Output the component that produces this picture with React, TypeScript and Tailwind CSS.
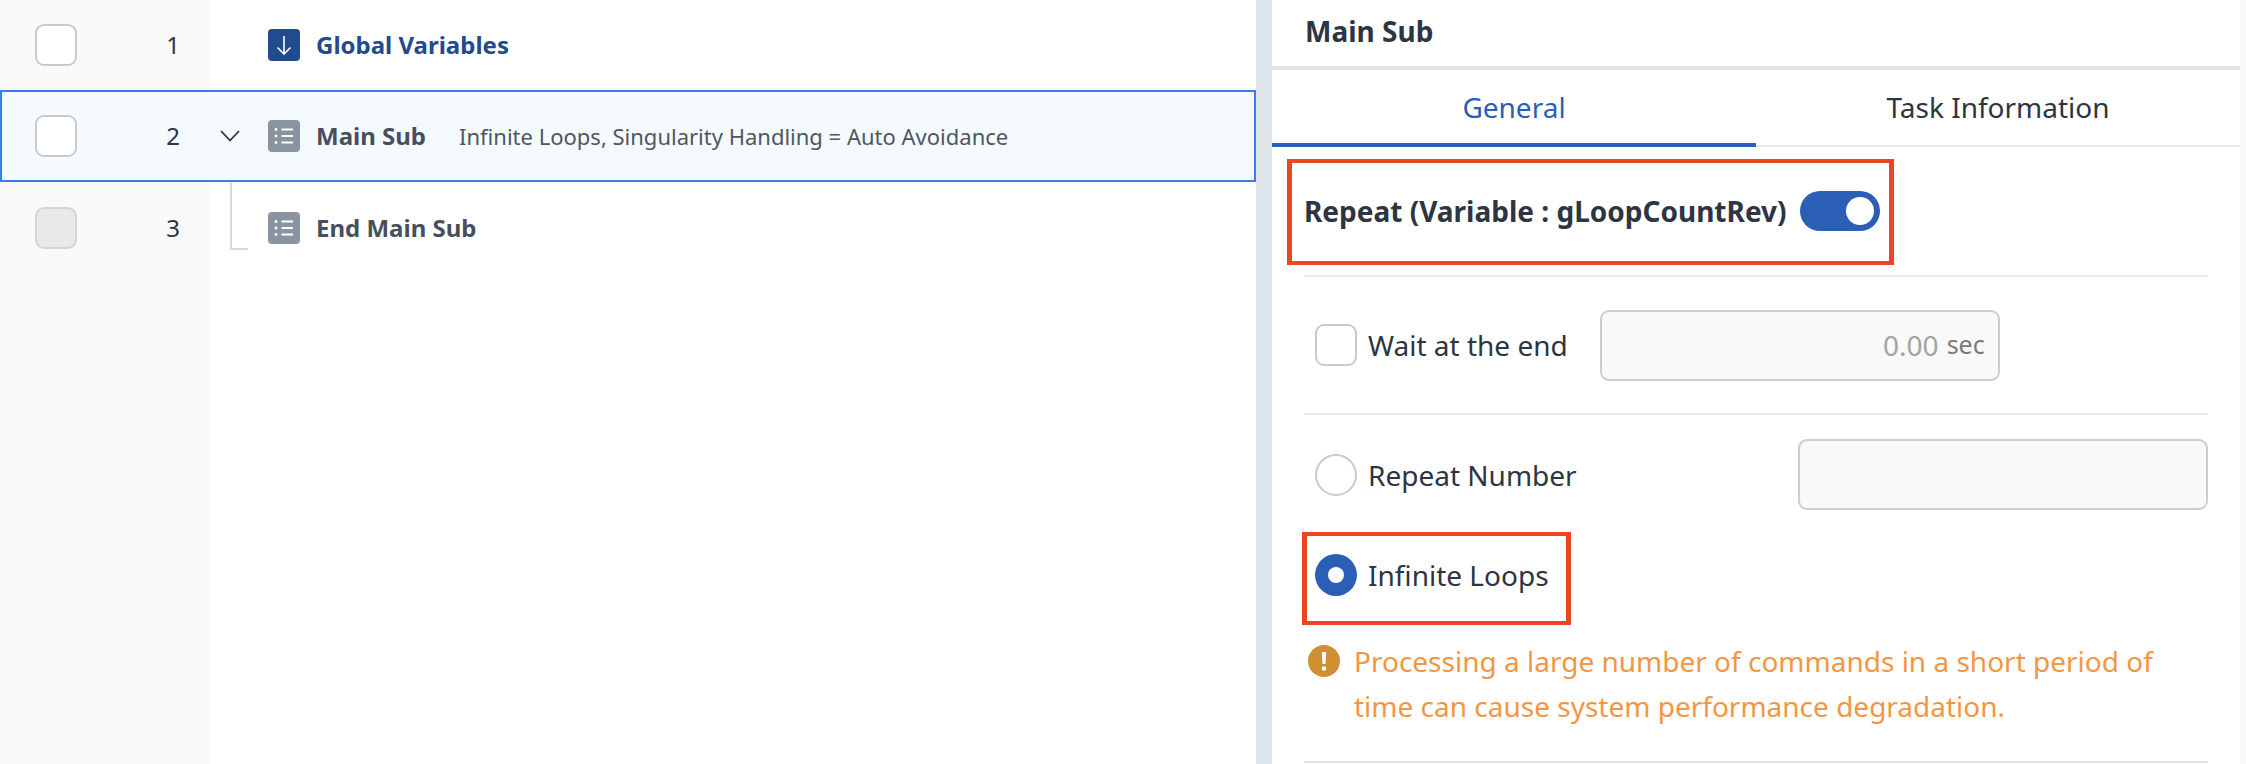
const BLUE = 'bg-[#2a5fb5]';

function Checkbox({ disabled }: { disabled?: boolean }) {
  return (
    <div
      className={`h-[42px] w-[42px] shrink-0 rounded-[9px] border-2 ${
        disabled ? 'border-[#d4d4d4] bg-[#e9e9e9]' : 'border-[#c9cacd] bg-white'
      }`}
    />
  );
}

function ListIcon() {
  return (
    <div className="flex h-[32px] w-[32px] shrink-0 items-center justify-center rounded-[4px] bg-[#8a94a1]">
      <svg width="20" height="18" viewBox="0 0 20 18" fill="none">
        <circle cx="2" cy="2.5" r="1.4" fill="white" />
        <circle cx="2" cy="9" r="1.4" fill="white" />
        <circle cx="2" cy="15.5" r="1.4" fill="white" />
        <path d="M7.5 2.5H19M7.5 9H19M7.5 15.5H19" stroke="white" strokeWidth="1.8" />
      </svg>
    </div>
  );
}

function ArrowIcon() {
  return (
    <div className="flex h-[32px] w-[32px] shrink-0 items-center justify-center rounded-[4px] bg-[#224a8f]">
      <svg width="16" height="20" viewBox="0 0 16 20" fill="none">
        <path d="M8 1V19M1.5 12.5L8 19L14.5 12.5" stroke="white" strokeWidth="1.6" />
      </svg>
    </div>
  );
}

function Row({
  num,
  height,
  selected,
  disabled,
  children,
}: {
  num: number;
  height: string;
  selected?: boolean;
  disabled?: boolean;
  children: React.ReactNode;
}) {
  return (
    <div className={`relative flex ${height} ${selected ? 'bg-[#f5faff] ring-2 ring-inset ring-[#3b7de8]' : ''}`}>
      <div className={`flex w-[210px] shrink-0 items-center pl-[35px] ${selected ? '' : 'bg-[#f9f9f9]'}`}>
        <Checkbox disabled={disabled} />
        <span className="ml-[73px] w-[46px] text-center text-[24px] text-[#2d3542]">{num}</span>
      </div>
      <div className="flex min-w-0 flex-1 items-center">{children}</div>
    </div>
  );
}

export default function App() {
  return (
    <div
      className="flex h-[764px] w-[2246px] overflow-hidden bg-white"
      style={{ fontFamily: '"Noto Sans", sans-serif' }}
    >
      {/* command list */}
      <div className="flex w-[1256px] shrink-0 flex-col">
        <Row num={1} height="h-[90px]">
          <div className="ml-[58px] flex items-center gap-[16px]">
            <ArrowIcon />
            <span className="text-[24px] font-bold text-[#224a8f]">Global Variables</span>
          </div>
        </Row>
        <Row num={2} height="h-[92px]" selected>
          <svg className="ml-[10px]" width="20" height="12" viewBox="0 0 20 12" fill="none">
            <path d="M1 1L10 10.5L19 1" stroke="#2d3542" strokeWidth="1.8" />
          </svg>
          <div className="ml-[28px] flex items-center gap-[16px]">
            <ListIcon />
            <span className="text-[24px] font-bold text-[#474f5c]">Main Sub</span>
          </div>
          <span className="ml-[33px] text-[22px] text-[#4f5661]">Infinite Loops, Singularity Handling = Auto Avoidance</span>
        </Row>
        <Row num={3} height="h-[92px]" disabled>
          <div className="absolute left-[230px] top-0 h-[68px] w-[18px] border-b-2 border-l-2 border-[#d8dadd]" />
          <div className="ml-[58px] flex items-center gap-[16px]">
            <ListIcon />
            <span className="text-[24px] font-bold text-[#474f5c]">End Main Sub</span>
          </div>
        </Row>
        <div className="w-[210px] flex-1 bg-[#f9f9f9]" />
      </div>

      {/* splitter */}
      <div className="w-[16px] shrink-0 bg-[#e0e5ea]" />

      {/* properties panel */}
      <div className="flex w-[968px] shrink-0 flex-col">
        <div className="flex h-[70px] shrink-0 items-center border-b-4 border-[#e4e4e4] pb-[4px] pl-[33px]">
          <span className="text-[28px] font-bold text-[#2d3542]">Main Sub</span>
        </div>

        <div className="flex h-[77px] shrink-0">
          <div className="flex flex-1 items-center justify-center border-b-4 border-[#2a5fb5] text-[28px] text-[#2a5fb5]">
            General
          </div>
          <div className="flex flex-1 items-center justify-center border-b-2 border-[#e8e8ee] pb-[2px] text-[28px] text-[#2d3542]">
            Task Information
          </div>
        </div>

        <div className="mx-[32px] flex flex-col">
          <div className="relative flex h-[130px] items-center gap-[13px] border-b-2 border-[#e8e8ee]">
            <span className="text-[28px] font-bold text-[#2d3542]">Repeat (Variable : gLoopCountRev)</span>
            <div className={`flex h-[40px] w-[80px] items-center justify-end rounded-full pr-[6px] ${BLUE}`}>
              <div className="h-[28px] w-[28px] rounded-full bg-white" />
            </div>
            <div className="pointer-events-none absolute left-[-17px] top-[12px] h-[106px] w-[607px] border-x-[5px] border-y-4 border-[#ee4426]" />
          </div>

          <div className="flex h-[138px] items-center border-b-2 border-[#e8e8ee] pl-[11px]">
            <Checkbox />
            <span className="ml-[11px] text-[28px] text-[#2d3542]">Wait at the end</span>
            <div className="ml-[32px] flex h-[71px] w-[400px] items-center justify-end gap-[8px] rounded-[9px] border-2 border-[#cdcdcd] bg-[#f9f9f9] pr-[13px]">
              <span className="text-[28px] text-[#a3a3a3]">0.00</span>
              <span className="text-[25px] text-[#777b80]">sec</span>
            </div>
          </div>

          <div className="flex h-[95px] shrink-0 items-center justify-between pl-[11px] pt-[24px]">
            <div className="flex items-center gap-[11px]">
              <div className="h-[42px] w-[42px] rounded-full border-2 border-[#c9cacd]" />
              <span className="text-[28px] text-[#2d3542]">Repeat Number</span>
            </div>
            <div className="h-[71px] w-[410px] rounded-[9px] border-2 border-[#cdcdcd] bg-[#f9f9f9]" />
          </div>

          <div className="relative flex h-[114px] shrink-0 items-center gap-[11px] pl-[11px] pt-[16px]">
            <div className={`flex h-[42px] w-[42px] items-center justify-center rounded-full ${BLUE}`}>
              <div className="h-[16px] w-[16px] rounded-full bg-white" />
            </div>
            <span className="text-[28px] text-[#2d3542]">Infinite Loops</span>
            <div className="pointer-events-none absolute left-[-2px] top-[22px] h-[93px] w-[269px] border-x-[5px] border-y-4 border-[#ee4426]" />
          </div>

          <div className="flex items-start gap-[14px] pl-[4px] pt-[21px]">
            <svg className="shrink-0" width="32" height="32" viewBox="0 0 32 32">
              <circle cx="16" cy="16" r="16" fill="#d18f34" />
              <path d="M13.8 7H18.2L17.5 19H14.5Z" fill="white" />
              <circle cx="16" cy="23.5" r="2.3" fill="white" />
            </svg>
            <p className="-mt-[6px] w-[830px] text-[28px] leading-[45px] text-[#f39642]">
              Processing a large number of commands in a short period of time can cause system performance degradation.
            </p>
          </div>

          <div className="mt-[32px] h-[2px] shrink-0 bg-[#e4e4e4]" />
        </div>
      </div>

      {/* scrollbar track */}
      <div className="w-[6px] shrink-0 bg-[#f9f9f9]" />
    </div>
  );
}
